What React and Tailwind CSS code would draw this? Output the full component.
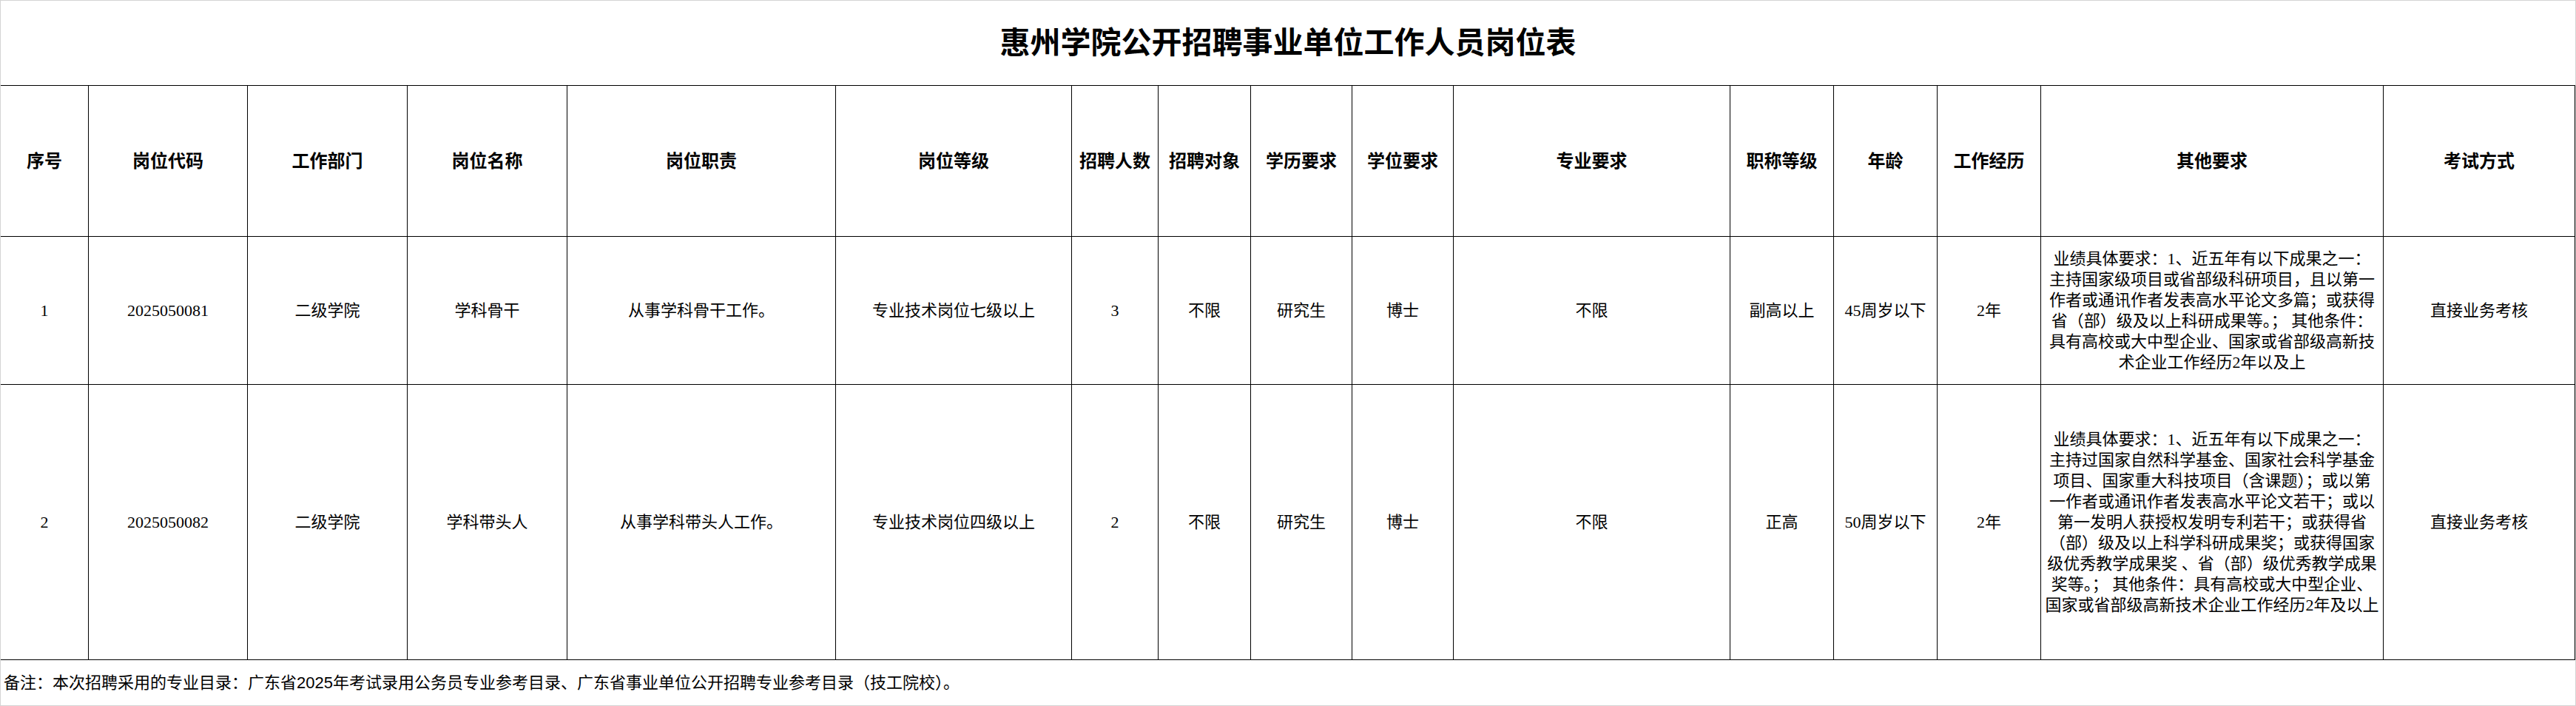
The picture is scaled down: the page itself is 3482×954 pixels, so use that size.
import React from 'react';

// 岗位表列宽（与截图像素对齐）
const headers = [
    '序号', '岗位代码', '工作部门', '岗位名称', '岗位职责', '岗位等级', '招聘人数', '招聘对象',
    '学历要求', '学位要求', '专业要求', '职称等级', '年龄', '工作经历', '其他要求', '考试方式',
];

const rows = [
    {
        h: 'h-[200px]',
        cells: ['1', '2025050081', '二级学院', '学科骨干', '从事学科骨干工作。', '专业技术岗位七级以上', '3', '不限', '研究生', '博士', '不限', '副高以上', '45周岁以下', '2年'],
        other: [
            '业绩具体要求：1、近五年有以下成果之一：',
            '主持国家级项目或省部级科研项目，且以第一',
            '作者或通讯作者发表高水平论文多篇；或获得',
            '省（部）级及以上科研成果等。； 其他条件：',
            '具有高校或大中型企业、国家或省部级高新技',
            '术企业工作经历2年以及上',
        ],
        exam: '直接业务考核',
    },
    {
        h: 'h-[372px]',
        cells: ['2', '2025050082', '二级学院', '学科带头人', '从事学科带头人工作。', '专业技术岗位四级以上', '2', '不限', '研究生', '博士', '不限', '正高', '50周岁以下', '2年'],
        other: [
            '业绩具体要求：1、近五年有以下成果之一：',
            '主持过国家自然科学基金、国家社会科学基金',
            '项目、国家重大科技项目（含课题）；或以第',
            '一作者或通讯作者发表高水平论文若干；或以',
            '第一发明人获授权发明专利若干；或获得省',
            '（部）级及以上科学科研成果奖；或获得国家',
            '级优秀教学成果奖 、省（部）级优秀教学成果',
            '奖等。； 其他条件：具有高校或大中型企业、',
            '国家或省部级高新技术企业工作经历2年及以上',
        ],
        exam: '直接业务考核',
    },
];

const gridCols = 'grid grid-cols-[119px_215px_216px_216px_363px_319px_117px_125px_137px_137px_374px_140px_140px_140px_463px_259px]';
const cell = 'border-r border-b border-black flex items-center justify-center text-center';

export default function App() {
    return (
        <div className="w-[3482px] h-[954px] border border-[#d4d4d4] bg-white text-black flex flex-col font-['Liberation_Serif','Noto_Sans_CJK_SC',serif]">
            {/* 标题 */}
            <div className="h-[115px] shrink-0 border-b border-black flex items-center justify-center text-[41px] font-bold leading-none">
                惠州学院公开招聘事业单位工作人员岗位表
            </div>

            {/* 表头 */}
            <div className={gridCols}>
                {headers.map((t) => (
                    <div key={t} className={`${cell} h-[204px] text-[24px] font-bold`}>{t}</div>
                ))}
            </div>

            {/* 数据行 */}
            {rows.map((r) => (
                <div key={r.cells[0]} className={gridCols}>
                    {r.cells.map((t, i) => (
                        <div key={i} className={`${cell} ${r.h} text-[22px]`}>{t}</div>
                    ))}
                    <div className={`${cell} ${r.h} flex-col text-[22px] leading-[28px]`}>
                        {r.other.map((line, i) => (
                            <div key={i} className="whitespace-pre">{line}</div>
                        ))}
                    </div>
                    <div className={`${cell} ${r.h} text-[22px]`}>{r.exam}</div>
                </div>
            ))}

            {/* 备注 */}
            <div className="flex-1 flex items-center pl-[4px] text-[22px] font-['Liberation_Sans','Noto_Sans_CJK_SC',sans-serif]">
                备注：本次招聘采用的专业目录：广东省2025年考试录用公务员专业参考目录、广东省事业单位公开招聘专业参考目录（技工院校）。
            </div>
        </div>
    );
}
